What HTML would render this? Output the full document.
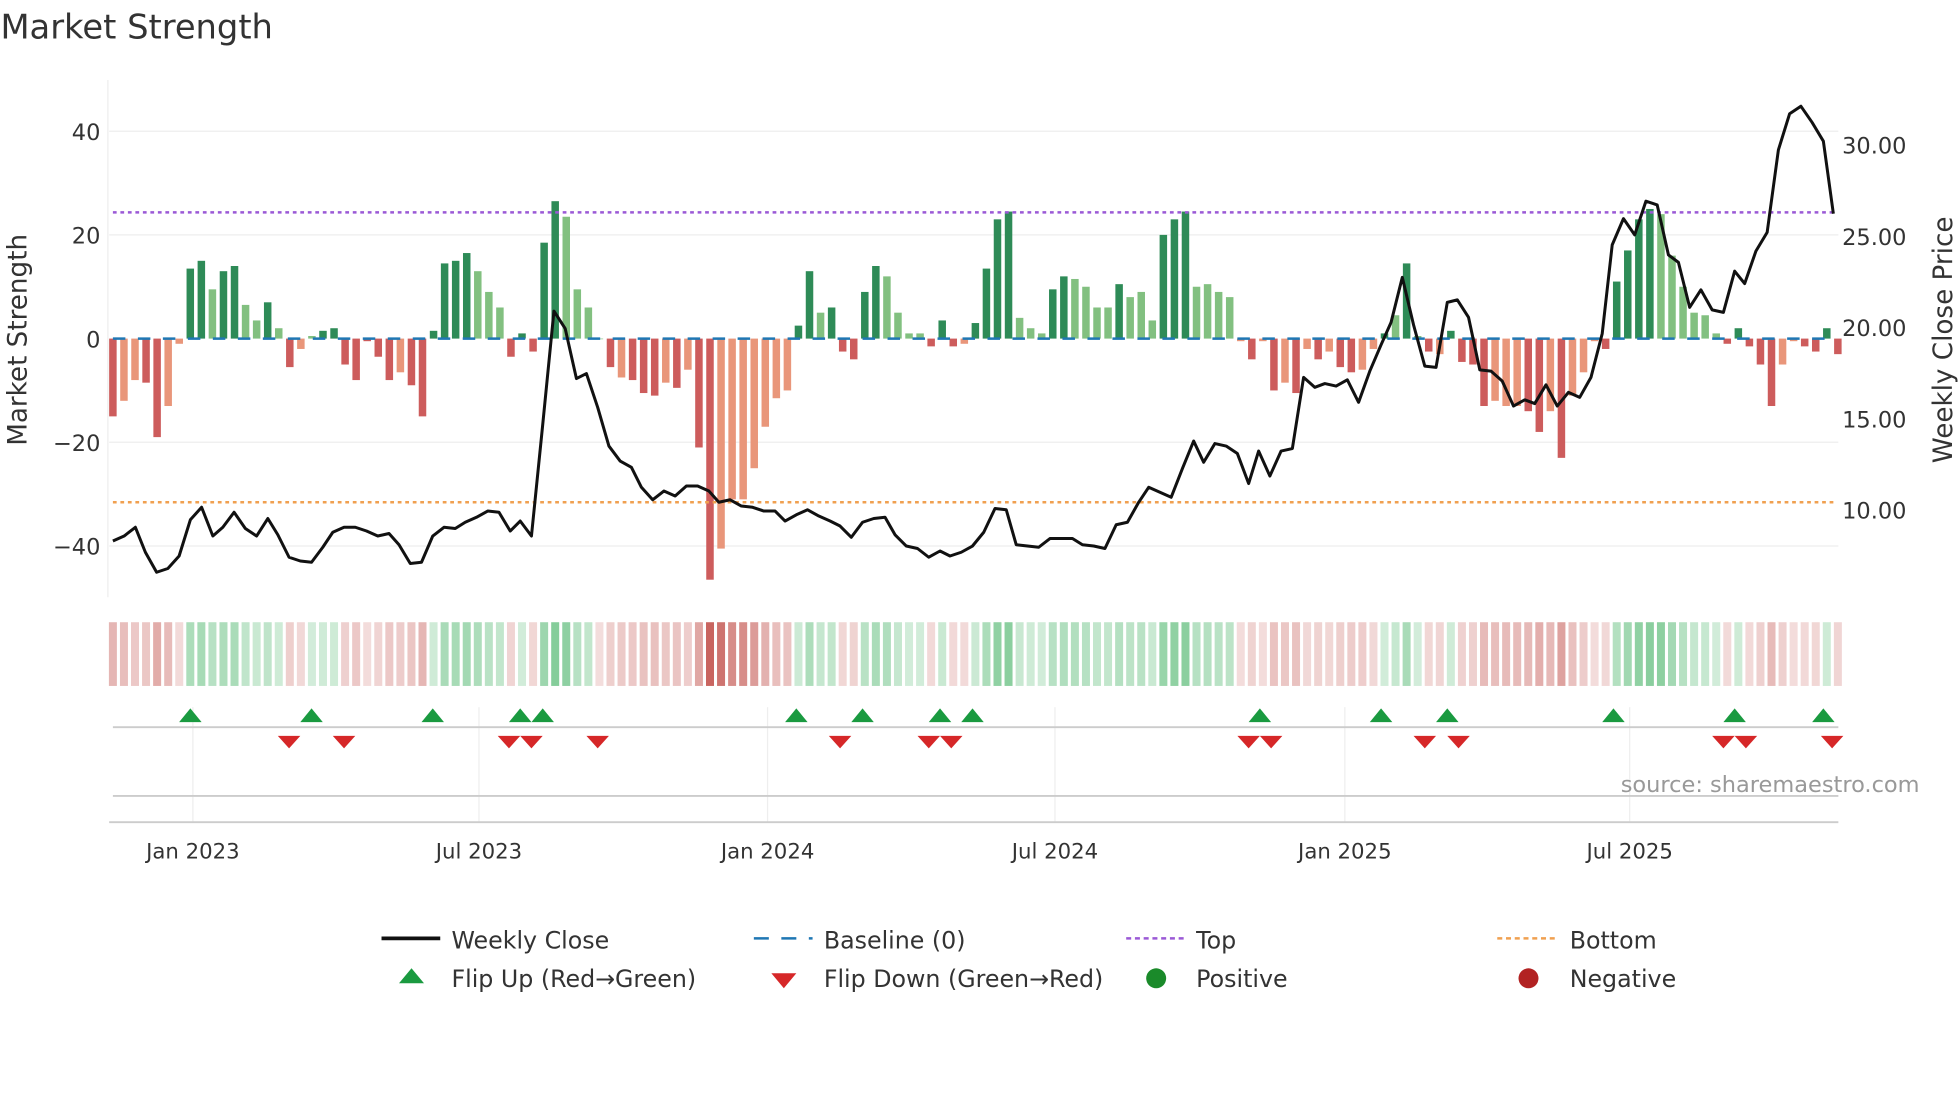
<!DOCTYPE html>
<html><head><meta charset="utf-8"><style>
html,body{margin:0;padding:0;background:#fff;width:1960px;height:1102px;overflow:hidden}
svg{display:block}
text{font-family:"DejaVu Sans","Liberation Sans",sans-serif;fill:#333}
</style></head><body>
<svg id="s" width="1960" height="1102" viewBox="0 0 1568 882" xmlns="http://www.w3.org/2000/svg">
<text x="0" y="31" font-size="27">Market Strength</text>
<g stroke="#eee" stroke-width="1">
<line x1="87" y1="105" x2="1471" y2="105"/><line x1="87" y1="188" x2="1471" y2="188"/>
<line x1="87" y1="354" x2="1471" y2="354"/><line x1="87" y1="437" x2="1471" y2="437"/>
</g>
<line x1="86" y1="64" x2="86" y2="478" stroke="#eee"/>
<g font-size="18" text-anchor="end">
<text x="80" y="112">40</text><text x="80" y="195">20</text><text x="80" y="278">0</text>
<text x="80" y="361">−20</text><text x="80" y="444">−40</text>
</g>
<g font-size="18">
<text x="1474" y="123">30.00</text><text x="1474" y="196">25.00</text><text x="1474" y="269">20.00</text>
<text x="1474" y="342">15.00</text><text x="1474" y="415">10.00</text>
</g>
<text transform="translate(21,272) rotate(-90)" font-size="21" text-anchor="middle">Market Strength</text>
<text transform="translate(1562,272) rotate(-90)" font-size="21" text-anchor="middle">Weekly Close Price</text>
<g id="bars"></g>
<line x1="90" y1="271" x2="1468" y2="271" stroke="#1f77b4" stroke-width="2" stroke-dasharray="10,10"/>
<line x1="90" y1="170" x2="1468" y2="170" stroke="#9b59d6" stroke-width="2" stroke-dasharray="3,3"/>
<line x1="90" y1="402" x2="1468" y2="402" stroke="#f0a050" stroke-width="2" stroke-dasharray="3,3"/>
<polyline id="price" fill="none" stroke="#111" stroke-width="2.4" stroke-linejoin="round"/>
<g id="heat"></g>
<g stroke="#eee"><line x1="154" y1="566" x2="154" y2="658"/><line x1="383" y1="566" x2="383" y2="658"/><line x1="614" y1="566" x2="614" y2="658"/><line x1="844" y1="566" x2="844" y2="658"/><line x1="1076" y1="566" x2="1076" y2="658"/><line x1="1304" y1="566" x2="1304" y2="658"/></g>
<line x1="90" y1="582" x2="1471" y2="582" stroke="#ccc" stroke-width="1.5"/>
<line x1="90" y1="637" x2="1471" y2="637" stroke="#ccc" stroke-width="1.5"/>
<line x1="87" y1="658" x2="1471" y2="658" stroke="#ccc" stroke-width="1.5"/>
<g id="mk"></g>
<text x="1536" y="634" font-size="18" text-anchor="end" fill="#999" style="fill:#999">source: sharemaestro.com</text>
<g font-size="17" text-anchor="middle">
<text x="154" y="687">Jan 2023</text><text x="383" y="687">Jul 2023</text><text x="614" y="687">Jan 2024</text>
<text x="844" y="687">Jul 2024</text><text x="1076" y="687">Jan 2025</text><text x="1304" y="687">Jul 2025</text>
</g>
<g font-size="19">
<line x1="305" y1="751" x2="352" y2="751" stroke="#111" stroke-width="3"/><text x="361" y="759">Weekly Close</text>
<line x1="603" y1="751" x2="650" y2="751" stroke="#1f77b4" stroke-width="2" stroke-dasharray="12,10"/><text x="659" y="759">Baseline (0)</text>
<line x1="901" y1="751" x2="948" y2="751" stroke="#9b59d6" stroke-width="2" stroke-dasharray="4,3"/><text x="957" y="759">Top</text>
<line x1="1198" y1="751" x2="1245" y2="751" stroke="#f0a050" stroke-width="2" stroke-dasharray="4,3"/><text x="1256" y="759">Bottom</text>
<polygon points="319,787 329,775 339,787" fill="#1a9a40"/><text x="361" y="790">Flip Up (Red→Green)</text>
<polygon points="617,779 637,779 627,791" fill="#d62728"/><text x="659" y="790">Flip Down (Green→Red)</text>
<circle cx="925" cy="783" r="8" fill="#1a8a2a"/><text x="957" y="790">Positive</text>
<circle cx="1223" cy="783" r="8" fill="#b22222"/><text x="1256" y="790">Negative</text>
</g>
</svg>
<script>
var V=[[-15,1],[-12,0],[-8,0],[-8.5,1],[-19,1],[-13,0],[-1,0],[13.5,1],[15,1],[9.5,0],[13,1],[14,1],[6.5,0],[3.5,0],[7,1],[2,0],[-5.5,1],[-2,0],[0.5,0],[1.5,1],[2,1],[-5,1],[-8,1],[-0.5,1],[-3.5,1],[-8,1],[-6.5,0],[-9,1],[-15,1],[1.5,1],[14.5,1],[15,1],[16.5,1],[13,0],[9,0],[6,0],[-3.5,1],[1,1],[-2.5,1],[18.5,1],[26.5,1],[23.5,0],[9.5,0],[6,0],[0,0],[-5.5,1],[-7.5,0],[-8,1],[-10.5,1],[-11,1],[-8.5,0],[-9.5,1],[-6,0],[-21,1],[-46.5,1],[-40.5,0],[-31,0],[-31,0],[-25,0],[-17,0],[-11.5,0],[-10,0],[2.5,1],[13,1],[5,0],[6,1],[-2.5,1],[-4,1],[9,1],[14,1],[12,0],[5,0],[1,0],[1,0],[-1.5,1],[3.5,1],[-1.5,1],[-1,0],[3,1],[13.5,1],[23,1],[24.5,1],[4,0],[2,0],[1,0],[9.5,1],[12,1],[11.5,0],[10,0],[6,0],[6,0],[10.5,1],[8,0],[9,0],[3.5,0],[20,1],[23,1],[24.5,1],[10,0],[10.5,0],[9,0],[8,0],[-0.5,0],[-4,1],[-0.5,0],[-10,1],[-8.5,0],[-10.5,1],[-2,0],[-4,1],[-2.5,0],[-5.5,1],[-6.5,1],[-6,0],[-2,0],[1,1],[4.5,0],[14.5,1],[0.5,0],[-2.5,1],[-3,0],[1.5,1],[-4.5,1],[-5,1],[-13,1],[-12,0],[-13,0],[-13,0],[-14,1],[-18,1],[-14,0],[-23,1],[-11,0],[-6.5,0],[-0.5,0],[-2,1],[11,1],[17,1],[23,1],[25,1],[24,0],[16,0],[10,0],[5,0],[4.5,0],[1,0],[-1,1],[2,1],[-1.5,1],[-5,1],[-13,1],[-5,0],[-0.5,0],[-1.5,1],[-2.5,1],[2,1],[-3,1]];
var NS="http://www.w3.org/2000/svg";
function el(g,t,a){var e=document.createElementNS(NS,t);for(var k in a)e.setAttribute(k,a[k]);g.appendChild(e);return e}
var bars=document.getElementById('bars'),heat=document.getElementById('heat');
V.forEach(function(d,i){var x=90+8.85*i,v=d[0],h=Math.abs(v)*4.15;
 var c=v>=0?(d[1]?'#2e8b57':'#82c080'):(d[1]?'#cd5c5c':'#e9967a');
 el(bars,'rect',{x:x-3,y:v>=0?271-h:271,width:6,height:Math.max(h,0.5),fill:c});
 var t,base;
 if(v>0){t=Math.min(1,0.3+0.55*v/27);base=[110,195,135];}
 else{t=Math.min(1,0.2+0.7*Math.abs(v)/46);base=[195,85,80];}
 var r=Math.round(255-(255-base[0])*t),g=Math.round(255-(255-base[1])*t),b=Math.round(255-(255-base[2])*t);
 el(heat,'rect',{x:x-3.2,y:498,width:6.4,height:51,fill:'rgb('+r+','+g+','+b+')'});
});
var P=[[90,433],[99,429],[108,422],[116,442],[125,458],[134,455],[143,445],[152,416],[161,406],[170,429],[178,422],[187,410],[196,423],[205,429],[214,415],[222,428],[231,446],[240,449],[249,450],[258,438],[266,426],[275,422],[284,422],[293,425],[302,429],[311,427],[319,436],[328,451],[337,450],[346,429],[355,422],[364,423],[372,418],[381,414],[390,409],[399,410],[408,425],[416,417],[425,429],[434,340],[443,249],[452,263],[461,303],[469,299],[478,326],[487,357],[496,369],[505,374],[513,390],[522,400],[531,393],[540,397],[549,389],[558,389],[567,393],[575,402],[584,400],[593,405],[602,406],[611,409],[620,409],[628,417],[637,412],[646,408],[655,413],[664,417],[672,421],[681,430],[690,418],[699,415],[708,414],[716,428],[725,437],[734,439],[743,446],[752,441],[760,445],[769,442],[778,437],[787,426],[796,407],[805,408],[813,436],[822,437],[831,438],[840,431],[849,431],[858,431],[866,436],[875,437],[884,439],[893,420],[902,418],[911,402],[919,390],[928,394],[937,398],[946,375],[955,353],[963,370],[972,355],[981,357],[990,363],[999,387],[1007,361],[1016,381],[1025,361],[1034,359],[1043,302],[1052,310],[1060,307],[1069,309],[1078,304],[1087,322],[1096,297],[1105,276],[1113,258],[1122,222],[1131,260],[1140,293],[1149,294],[1158,242],[1166,240],[1175,254],[1184,296],[1193,297],[1202,305],[1211,325],[1220,320],[1228,323],[1237,308],[1246,325],[1255,314],[1264,318],[1273,302],[1282,267],[1290,196],[1299,175],[1308,188],[1317,161],[1326,164],[1335,204],[1343,210],[1352,246],[1361,232],[1370,248],[1379,250],[1388,217],[1396,227],[1405,201],[1414,186],[1423,120],[1432,91],[1441,85],[1450,98],[1459,113],[1467,171]];
document.getElementById('price').setAttribute('points',P.map(function(p){return p.join(',')}).join(' '));
var mk=document.getElementById('mk');
[152,249,346,416,434,637,690,752,778,1008,1105,1158,1291,1388,1459].forEach(function(x){el(mk,'polygon',{points:(x-9)+',578 '+x+',567 '+(x+9)+',578',fill:'#1a9a40'})});
[231,275,407,425,478,672,743,761,999,1017,1140,1167,1379,1397,1466].forEach(function(x){el(mk,'polygon',{points:(x-9)+',589 '+(x+9)+',589 '+x+',599',fill:'#d62728'})});
</script>
</body></html>
